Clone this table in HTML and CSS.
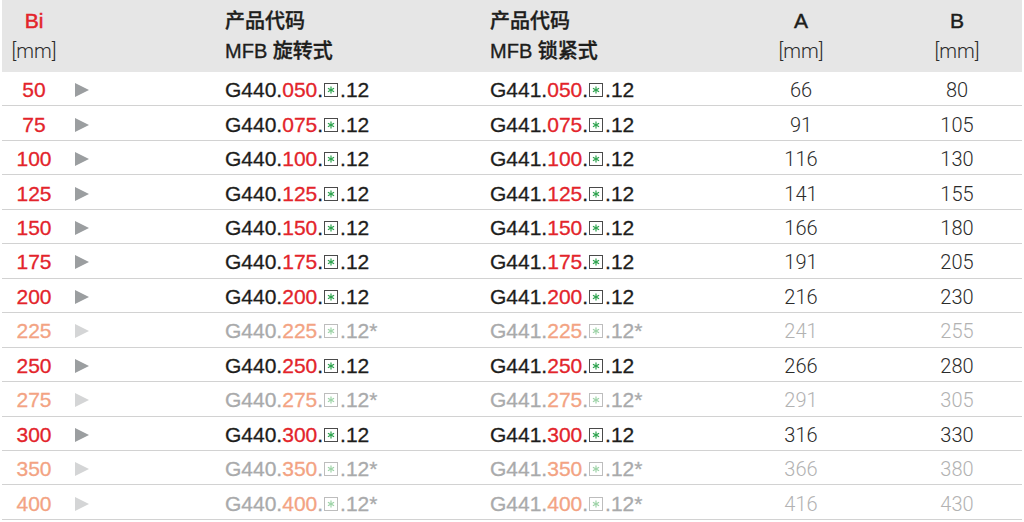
FILE: index.html
```html
<!DOCTYPE html>
<html lang="zh">
<head>
<meta charset="utf-8">
<link rel="stylesheet" href="styles.css">
</head>
<body>
<div class="table">
  <div class="row head">
    <div class="c bi"><span class="bi-t">Bi</span><span class="unit">[mm]</span></div>
    <div class="c tri"></div>
    <div class="c code"><span class="cn">产品代码</span><span class="cn">MFB 旋转式</span></div>
    <div class="c code"><span class="cn">产品代码</span><span class="cn">MFB 锁紧式</span></div>
    <div class="c num"><span class="hl">A</span><span class="unit">[mm]</span></div>
    <div class="c num b"><span class="hl">B</span><span class="unit">[mm]</span></div>
  </div>
  <div id="rows"></div>
</div>
<script src="app.js"></script>
</body>
</html>
```

FILE: app.js
```js
const data = [
  ["050", "50", 66, 80, 0],
  ["075", "75", 91, 105, 0],
  ["100", "100", 116, 130, 0],
  ["125", "125", 141, 155, 0],
  ["150", "150", 166, 180, 0],
  ["175", "175", 191, 205, 0],
  ["200", "200", 216, 230, 0],
  ["225", "225", 241, 255, 1],
  ["250", "250", 266, 280, 0],
  ["275", "275", 291, 305, 1],
  ["300", "300", 316, 330, 0],
  ["350", "350", 366, 380, 1],
  ["400", "400", 416, 430, 1]
];
const box = '<span class="box"><svg viewBox="0 0 10 10" width="8" height="8"><g stroke="currentColor" stroke-width="1.5" stroke-linecap="round"><line x1="5" y1="1.2" x2="5" y2="8.8"/><line x1="1.7" y1="3.1" x2="8.3" y2="6.9"/><line x1="1.7" y1="6.9" x2="8.3" y2="3.1"/></g></svg></span>';
const rows = document.getElementById("rows");
rows.innerHTML = data.map(([k, bi, a, b, f]) => {
  const star = f ? "*" : "";
  const code = (p) => `<div class="c code"><span class="pc">${p}.<span class="red">${k}</span>.${box}.12${star}</span></div>`;
  return `<div class="row${f ? " faded" : ""}">
    <div class="c bi"><span class="red">${bi}</span></div>
    <div class="c tri"><span class="arrow"></span></div>
    ${code("G440")}${code("G441")}
    <div class="c num">${a}</div>
    <div class="c num b">${b}</div>
  </div>`;
}).join("");
```

FILE: styles.css
```css
html, body {
  margin: 0;
  padding: 0;
  background: #fff;
}
body {
  font-family: "Liberation Sans", Arial, "Noto Sans CJK SC", sans-serif;
  color: #1d1d1b;
}
.table {
  margin: 0 2px;
  width: 1020px;
}
.row {
  display: grid;
  grid-template-columns: 64px 157px 265px 232px 162px 140px;
  height: 34.46px;
  border-bottom: 1.5px solid #d2d2d2;
  box-sizing: border-box;
  align-items: center;
  padding-top: 3px;
}
.row.head {
  height: 72px;
  background: #e6e6e6;
  border-bottom: none;
  align-items: start;
  padding-top: 6px;
}
.c {
  display: flex;
  flex-direction: column;
  font-size: 21px;
  line-height: 30px;
}
.bi {
  align-items: center;
  -webkit-text-stroke: 0.3px currentColor;
}
.bi-t {
  color: #e3242b;
  -webkit-text-stroke: 0.5px currentColor;
}
.unit {
  font-family: Roboto, "Liberation Sans", sans-serif;
  font-weight: 300;
  color: #2b2b2b;
  font-size: 20px;
  -webkit-text-stroke: 0;
}
.tri {
  padding-left: 9px;
}
.arrow {
  width: 0;
  height: 0;
  border-top: 7.5px solid transparent;
  border-bottom: 7.5px solid transparent;
  border-left: 14px solid #9b9ea0;
}
.code {
  padding-left: 2px;
}
.cn {
  font-family: "Liberation Sans", "Noto Sans CJK SC", sans-serif;
  font-weight: 500;
  font-size: 20px;
  -webkit-text-stroke: 0.35px currentColor;
  color: #1d1d1b;
}
.pc {
  -webkit-text-stroke: 0.3px currentColor;
  white-space: nowrap;
  display: flex;
  align-items: center;
}
.red {
  color: #e3242b;
}
.box {
  display: inline-flex;
  align-items: center;
  justify-content: center;
  width: 14px;
  height: 14px;
  box-sizing: border-box;
  border: 1px solid #4a4a4a;
  color: #2ba24c;
  margin: 0 2px 0 1px;
  -webkit-text-stroke: 0;
}
.num {
  align-items: center;
  font-family: Roboto, "Liberation Sans", sans-serif;
  font-weight: 300;
  font-size: 20px;
  color: #2b2b2b;
}
.num.b {
  padding-left: 10px;
}
.hl {
  font-family: "Liberation Sans", sans-serif;
  -webkit-text-stroke: 0.45px currentColor;
  font-size: 21px;
  color: #1d1d1b;
}
.faded .red {
  color: #f3a383;
}
.faded .pc {
  color: #a9aaab;
}
.faded .arrow {
  border-left-color: #d4d5d6;
}
.faded .box {
  border-color: #bdbdbd;
  color: #9dd3a7;
}
.faded .num {
  color: #b2b2b2;
}
```
